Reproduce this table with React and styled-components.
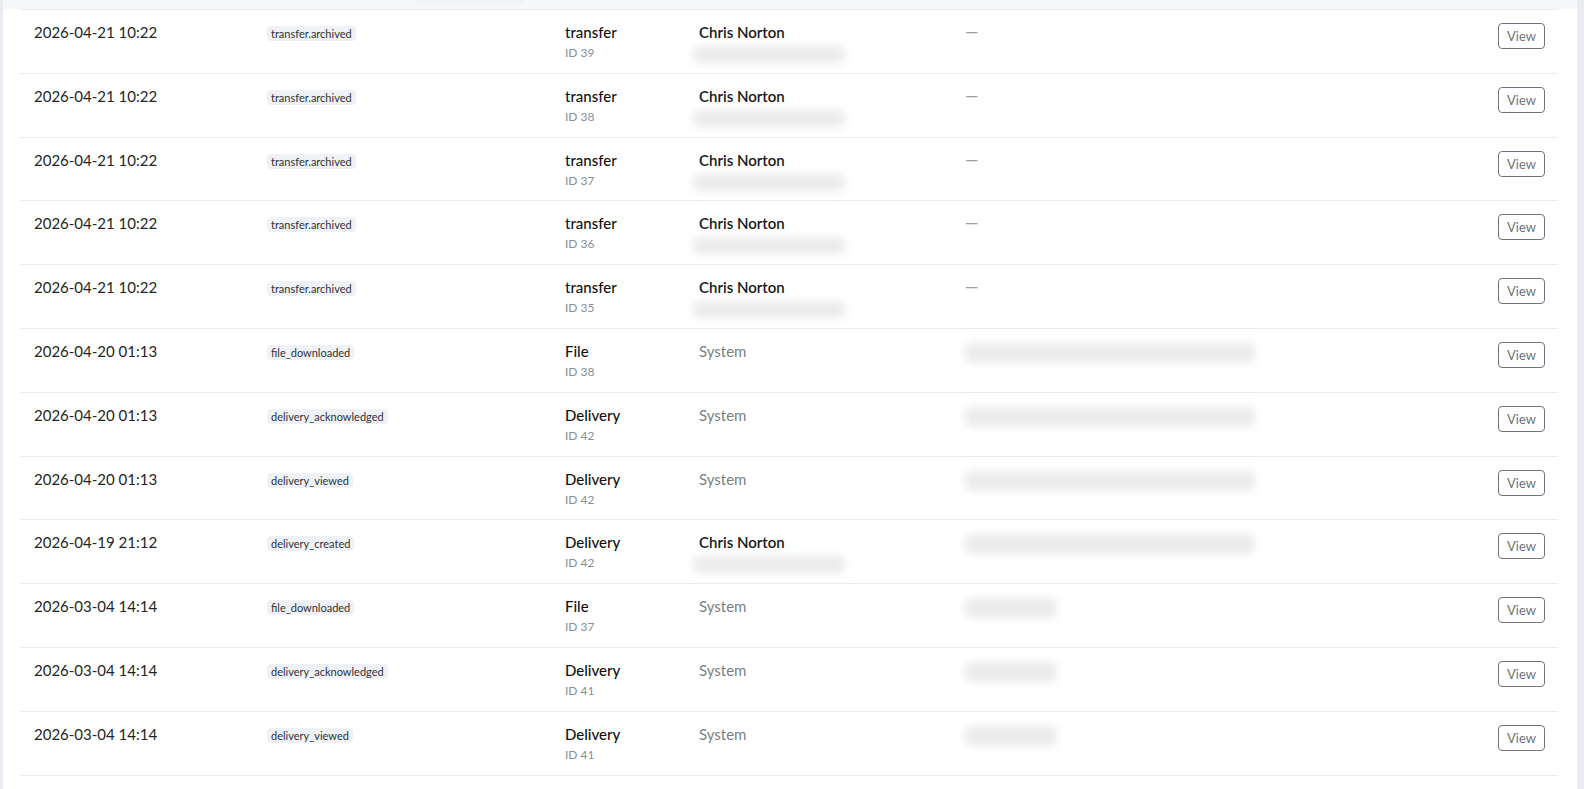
import React from 'react';
import styled, { createGlobalStyle } from 'styled-components';

const GlobalStyle = createGlobalStyle`
  body {
    margin: 0;
    background: #e9edf2;
    font-family: Lato, "Open Sans", sans-serif;
    color: #212529;
    overflow: hidden;
  }
`;

const events = [
  { at: '2026-04-21 10:22', action: 'transfer.archived', kind: 'transfer', id: 39, actor: 'Chris Norton', details: null },
  { at: '2026-04-21 10:22', action: 'transfer.archived', kind: 'transfer', id: 38, actor: 'Chris Norton', details: null },
  { at: '2026-04-21 10:22', action: 'transfer.archived', kind: 'transfer', id: 37, actor: 'Chris Norton', details: null },
  { at: '2026-04-21 10:22', action: 'transfer.archived', kind: 'transfer', id: 36, actor: 'Chris Norton', details: null },
  { at: '2026-04-21 10:22', action: 'transfer.archived', kind: 'transfer', id: 35, actor: 'Chris Norton', details: null },
  { at: '2026-04-20 01:13', action: 'file_downloaded', kind: 'File', id: 38, actor: null, details: 'wide' },
  { at: '2026-04-20 01:13', action: 'delivery_acknowledged', kind: 'Delivery', id: 42, actor: null, details: 'wide' },
  { at: '2026-04-20 01:13', action: 'delivery_viewed', kind: 'Delivery', id: 42, actor: null, details: 'wide' },
  { at: '2026-04-19 21:12', action: 'delivery_created', kind: 'Delivery', id: 42, actor: 'Chris Norton', details: 'wide' },
  { at: '2026-03-04 14:14', action: 'file_downloaded', kind: 'File', id: 37, actor: null, details: 'short' },
  { at: '2026-03-04 14:14', action: 'delivery_acknowledged', kind: 'Delivery', id: 41, actor: null, details: 'short' },
  { at: '2026-03-04 14:14', action: 'delivery_viewed', kind: 'Delivery', id: 41, actor: null, details: 'short' },
];

export default function App() {
  return (
    <>
      <GlobalStyle />
      <Page>
        <Card>
          <TopStrip>
            <TabHint />
          </TopStrip>
          <List>
            {events.map((e, i) => (
              <Row key={i}>
                <DateCell>{e.at}</DateCell>
                <Cell>
                  <Badge>{e.action}</Badge>
                </Cell>
                <Cell>
                  <Entity>{e.kind}</Entity>
                  <EntityId>ID {e.id}</EntityId>
                </Cell>
                <Cell>
                  {e.actor ? (
                    <>
                      <Actor>{e.actor}</Actor>
                      <Blur aria-hidden $width={152} $height={17} $shift={-6} $top={2} />
                    </>
                  ) : (
                    <SystemText>System</SystemText>
                  )}
                </Cell>
                <Cell>
                  {e.details ? (
                    <Blur aria-hidden $width={e.details === 'wide' ? 290 : 92} $height={20} $shift={0} $top={4} />
                  ) : (
                    <Dash>—</Dash>
                  )}
                </Cell>
                <ActionCell>
                  <ViewButton type="button">View</ViewButton>
                </ActionCell>
              </Row>
            ))}
            {/* next row starts just below the fold, only its button edge shows */}
            <Row>
              <span />
              <span />
              <span />
              <span />
              <span />
              <ActionCell>
                <ViewButton type="button" aria-label="View" />
              </ActionCell>
            </Row>
          </List>
        </Card>
      </Page>
    </>
  );
}

const Page = styled.div`
  padding: 0 7px 0 3px;
`;

const Card = styled.div`
  background: #fff;
  min-height: 800px;
`;

const TopStrip = styled.div`
  height: 9px;
  background: #f6f7f8;
  padding-left: 411px;
`;

const TabHint = styled.div`
  width: 111px;
  height: 3px;
  background: #eef5f4;
`;

const List = styled.div`
  padding: 0 20px 0 17px;
`;

const Row = styled.div`
  display: grid;
  grid-template-columns: 233px 298px 134px 266px 1fr auto;
  box-sizing: border-box;
  height: 63.8px;
  padding: 10px 12px 0 14px;
  border-top: 1px solid #e8eaed;
`;

const Cell = styled.div`
  display: flex;
  flex-direction: column;
  align-items: flex-start;
  line-height: 24px;
  min-width: 0;
`;

const DateCell = styled.div`
  font-size: 15px;
  line-height: 24px;
  color: #212529;
`;

const Badge = styled.span`
  display: inline-block;
  margin-top: 6px;
  padding: 1px 4px;
  font-size: 11px;
  line-height: 13px;
  color: #2f3337;
  background: #eef1f6;
  border-radius: 4px;
`;

const Entity = styled.div`
  font-size: 15px;
  font-weight: 500;
  line-height: 24px;
  color: #111;
`;

const EntityId = styled.div`
  font-size: 12px;
  line-height: 16px;
  padding-top: 1px;
  color: #8a8f95;
`;

const Actor = styled.div`
  font-size: 15px;
  font-weight: 600;
  line-height: 24px;
  color: #16181b;
`;

const SystemText = styled.div`
  font-size: 15px;
  line-height: 24px;
  color: #7a7f85;
`;

const Dash = styled.div`
  font-size: 17px;
  line-height: 23px;
  color: #9a9ea3;
`;

const Blur = styled.span`
  display: block;
  width: ${(p) => p.$width}px;
  height: ${(p) => p.$height}px;
  margin-left: ${(p) => p.$shift}px;
  margin-top: ${(p) => p.$top}px;
  background: #ebebeb;
  border-radius: 6px;
  filter: blur(4px);
`;

const ActionCell = styled.div`
  display: flex;
  justify-content: flex-end;
  align-items: flex-start;
`;

const ViewButton = styled.button`
  margin-top: 3px;
  width: 47px;
  height: 26px;
  padding: 0;
  font-family: inherit;
  font-size: 13px;
  color: #6c757d;
  background: #fff;
  border: 1px solid #6c757d;
  border-radius: 4px;
  cursor: pointer;
`;
